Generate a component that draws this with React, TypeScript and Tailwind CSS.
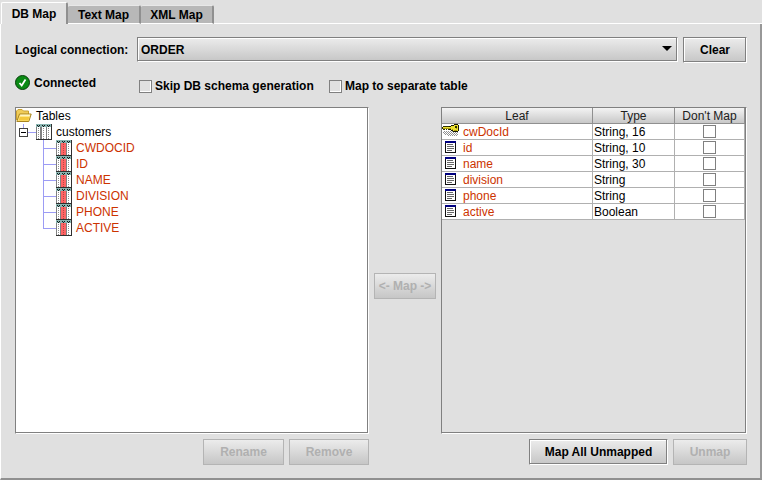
import React, { useState } from "react";

const fields = ["CWDOCID", "ID", "NAME", "DIVISION", "PHONE", "ACTIVE"];

const leaves = [
  { name: "cwDocId", type: "String, 16", key: true },
  { name: "id", type: "String, 10" },
  { name: "name", type: "String, 30" },
  { name: "division", type: "String" },
  { name: "phone", type: "String" },
  { name: "active", type: "Boolean" },
];

function FolderIcon() {
  return (
    <svg width="16" height="16" viewBox="0 0 16 16" className="shrink-0" aria-hidden="true">
      <path d="M.5 12V3L2 1.500h4L7.500 3H12.500v3" fill="#f0cc58" stroke="#c8a030" />
      <path d="M.8 13.500 3.500 6h11.700l-2.400 7.500z" fill="#ffe680" stroke="#a88420" />
      <path d="M2.500 12.500h9.800l1-3.500H3.800z" fill="#f4c83c" />
      <path d="M4.200 7.200h9.800" stroke="#fffbe0" />
    </svg>
  );
}

function TableIcon({ column = false }: { column?: boolean }) {
  return (
    <svg width="16" height="16" viewBox="0 0 16 16" shapeRendering="crispEdges" className="shrink-0" aria-hidden="true">
      <rect width="16" height="16" fill="#303030" />
      <rect width="15" height="15" fill="#808080" />
      <rect width="15" height="3" fill="#88b4b0" />
      <path d="M1 1h1v1h-1zM3 1h1v1h-1zM2 2h1v1h-1zM6 1h1v1h-1zM8 1h1v1h-1zM7 2h1v1h-1zM11 1h1v1h-1zM13 1h1v1h-1zM12 2h1v1h-1z" fill="#101818" />
      <path d="M1 3h3v12H1zM11 3h4v12h-4z" fill="#fff" />
      <path d={column ? "M5 3h5v12H5z" : "M6 3h4v12H6z"} fill={column ? "#ff6464" : "#fff"} />
      <path d="M2.500 4v11M12.500 4v11" stroke="#909090" strokeDasharray="1 1" />
      <path d="M7.500 4v11" stroke={column ? "#b04848" : "#909090"} strokeDasharray="1 1" />
    </svg>
  );
}

function KeyIcon() {
  return (
    <svg width="17" height="15" viewBox="0 0 17 15" shapeRendering="crispEdges" className="shrink-0" aria-hidden="true">
      <path d="M2 7.500h14M2 9.500h14M6 11.500h10" stroke="#909090" strokeDasharray="1 1" />
      <path d="M1 8.500h15M3 10.500h13" stroke="#909090" strokeDasharray="1 1" />
      <path d="M1 2h6v1H1zM0 3h1v2H0zM1 5h2v1H1zM4 5h1v1H4zM6 5h2v1H6z" fill="#303000" />
      <path d="M7 2h2V1h3V0h4v1h1v6h-1v1h-5V7H9V6H7z" fill="#181800" />
      <path d="M1 3h8V2h3V1h4v6h-5V6H9V5H1z" fill="#ece030" />
      <path d="M1 4h8v1H1zM10 5h1v1h-1zM12 6h3v1h-3zM14 4h1v1h-1z" fill="#a89c10" />
      <path d="M13 2h2v2h-2z" fill="#303000" />
    </svg>
  );
}

function LeafIcon() {
  return (
    <svg width="17" height="15" viewBox="0 0 17 15" shapeRendering="crispEdges" className="shrink-0" aria-hidden="true">
      <path d="M3 1h11v12H3z" fill="#101010" />
      <path d="M4 3h9v9H4z" fill="#fff" />
      <path d="M3 1h11v2H3z" fill="#000080" />
      <path d="M5 4.500h6M5 6.500h7M5 8.500h7M5 10.500h5" stroke="#686868" />
    </svg>
  );
}

function ConnectedIcon() {
  return (
    <svg width="16" height="16" viewBox="0 0 16 16" className="shrink-0" aria-hidden="true">
      <circle cx="7.500" cy="7.500" r="7" fill="#0a8a14" stroke="#06400a" />
      <path d="M4.500 8l2.200 2.500 3.800-6" fill="none" stroke="#fff" strokeWidth="1.800" />
    </svg>
  );
}

function Branch({ last }: { last: boolean }) {
  return (
    <svg width="13" height="16" shapeRendering="crispEdges" className="shrink-0" aria-hidden="true">
      <path d={last ? "M.5 0v8.500H13" : "M.5 0v16M.5 8.500H13"} fill="none" stroke="#9c9cf4" />
    </svg>
  );
}

const raised =
  "border border-t-[#808080] border-l-[#808080] border-r-white border-b-white bg-linear-to-b from-[#ececec] to-[#c6c6c6] shadow-[inset_-1px_-1px_0_#808080,inset_1px_1px_0_#fff]";

const panel =
  "flex-1 border border-t-[#808080] border-l-[#808080] border-r-white border-b-white pr-px pb-px shadow-[inset_-1px_-1px_0_#808080]";

function Button({ children, disabled, className = "" }: { children: React.ReactNode; disabled?: boolean; className?: string }) {
  return (
    <button
      type="button"
      disabled={disabled}
      className={`h-[26px] shrink-0 whitespace-nowrap text-center font-bold ${
        disabled ? "border border-[#b4b4b4] bg-linear-to-b from-[#ececec] to-[#c6c6c6] text-[#b0b0b0]" : raised
      } ${className}`}
    >
      {children}
    </button>
  );
}

const box =
  "size-[13px] shrink-0 appearance-none border border-[#808080] shadow-[inset_-1px_-1px_0_#fff] checked:bg-[#606060]";

const tabs = [
  { name: "DB Map", width: "w-[67px]" },
  { name: "Text Map", width: "w-[73px]" },
  { name: "XML Map", width: "w-[73px]" },
];

export default function App() {
  const [tab, setTab] = useState(0);
  return (
    <div className="flex min-h-screen flex-col bg-[#e0e0e0] font-['Liberation_Sans',Arial,sans-serif] text-xs leading-4 text-black">
      <div role="tablist" className="flex h-6 items-end pl-px pt-0.5">
        {tabs.map(({ name, width }, i) => (
          <button
            key={name}
            type="button"
            role="tab"
            aria-selected={tab === i}
            onClick={() => setTab(i)}
            className={`${width} shrink-0 rounded-t-xs font-bold ${
              tab === i
                ? "h-[22px] border-t border-r-2 border-l border-t-white border-r-[#909090] border-l-white bg-[#e0e0e0]"
                : "h-[19px] border-t border-r-2 border-b border-t-[#e8e8e8] border-r-[#909090] border-b-white bg-[#b8b8b8]"
            }`}
          >
            {name}
          </button>
        ))}
        <div className="flex-1 border-b border-white" />
      </div>

      <main className="flex flex-1 flex-col border-r-2 border-b-2 border-l border-l-white border-r-[#989898] border-b-[#909090] pt-[13px] pr-[13px] pb-[13px] pl-3.5">
        <div className="flex items-start">
          <label htmlFor="connection" className="w-[122px] shrink-0 font-bold leading-[26px]">
            Logical connection:
          </label>
          <div className="relative flex-1">
            <select id="connection" className={`block h-[25px] w-full appearance-none pl-[3px] font-bold ${raised}`}>
              <option>ORDER</option>
            </select>
            <svg width="10" height="5" className="pointer-events-none absolute top-[9px] right-1.5" aria-hidden="true">
              <path d="M0 0h10L5 5z" />
            </svg>
          </div>
          <Button className="ml-[5px] w-16">Clear</Button>
        </div>

        <div className="mt-3 flex h-[19px] items-end font-bold">
          <div className="flex w-[124px] items-center gap-[3px] self-start">
            <ConnectedIcon />
            <span>Connected</span>
          </div>
          <label className="flex w-[190px] items-center gap-[3px]">
            <input type="checkbox" className={box} />
            Skip DB schema generation
          </label>
          <label className="flex items-center gap-[3px]">
            <input type="checkbox" className={box} />
            Map to separate table
          </label>
        </div>

        <div className="mt-[13px] grid flex-1 grid-cols-[354fr_62px_306fr] gap-x-[5px]">
          <section className="flex min-w-0 flex-col gap-[5px]">
            <div className={`${panel} bg-white`}>
              <div className="flex h-4 items-center gap-1">
                <FolderIcon />
                Tables
              </div>
              <div className="flex h-4 items-center">
                <svg width="20" height="16" shapeRendering="crispEdges" className="shrink-0" aria-hidden="true">
                  <path d="M7.500 0v4M12 8.500h8" stroke="#9c9cf4" />
                  <path d="M3.500 4.500h8v8h-8z" fill="#fff" stroke="#404040" />
                  <path d="M5 8.500h5" stroke="#000" />
                </svg>
                <TableIcon />
                <span className="pl-1">customers</span>
              </div>
              <ul className="pl-[27px]">
                {fields.map((name, i) => (
                  <li key={name} className="flex h-4 items-center text-[#cc3300]">
                    <Branch last={i === fields.length - 1} />
                    <TableIcon column />
                    <span className="pl-1">{name}</span>
                  </li>
                ))}
              </ul>
            </div>
            <div className="flex justify-end gap-[5px]">
              <Button disabled className="w-[81px]">Rename</Button>
              <Button disabled className="w-20">Remove</Button>
            </div>
          </section>

          <Button disabled className="w-full self-center">&lt;- Map -&gt;</Button>

          <section className="flex min-w-0 flex-col gap-[5px]">
            <div className={panel}>
              <table className="w-full table-fixed border-separate border-spacing-0">
                <colgroup>
                  <col />
                  <col className="w-[82px]" />
                  <col className="w-[70px]" />
                </colgroup>
                <thead>
                  <tr>
                    {["Leaf", "Type", "Don't Map"].map((name) => (
                      <th
                        key={name}
                        className="h-4 border-r border-b border-[#909090] bg-linear-to-b from-[#f4f4f4] to-[#c8c8c8] p-0 pt-px text-center leading-[14px] font-normal text-[#202020]"
                      >
                        {name}
                      </th>
                    ))}
                  </tr>
                </thead>
                <tbody className="bg-white">
                  {leaves.map((leaf) => (
                    <tr key={leaf.name}>
                      <td className="h-4 border-r border-b border-[#b0b0b0] p-0">
                        <div className="flex h-[15px] items-center gap-1 text-[#cc3300]">
                          {leaf.key ? <KeyIcon /> : <LeafIcon />}
                          {leaf.name}
                        </div>
                      </td>
                      <td className="border-r border-b border-[#b0b0b0] p-0 pt-px pl-px leading-[14px]">{leaf.type}</td>
                      <td className="border-r border-b border-[#b0b0b0] p-0">
                        <input type="checkbox" aria-label={`Don't map ${leaf.name}`} className={`${box} mx-auto block`} />
                      </td>
                    </tr>
                  ))}
                </tbody>
              </table>
            </div>
            <div className="flex justify-end gap-[5px]">
              <Button className="w-[139px]">Map All Unmapped</Button>
              <Button disabled className="w-[74px]">Unmap</Button>
            </div>
          </section>
        </div>
      </main>
    </div>
  );
}
